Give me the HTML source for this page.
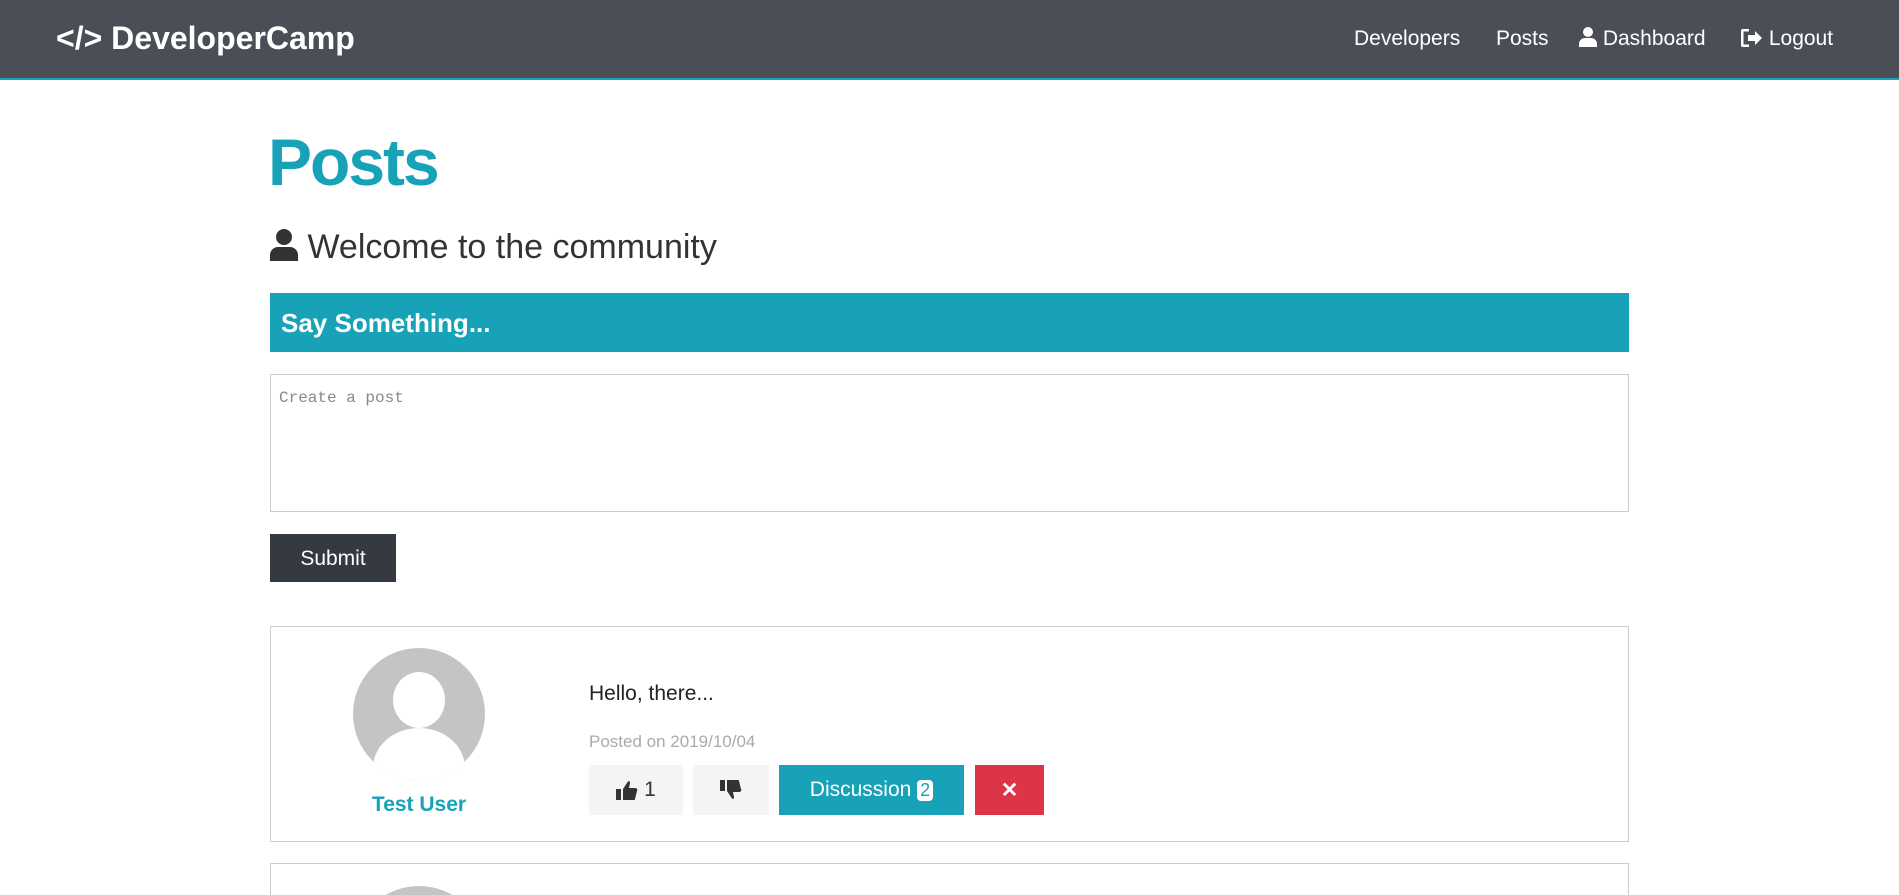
<!DOCTYPE html>
<html><head><meta charset="utf-8"><style>
*{box-sizing:border-box;margin:0;padding:0}
html,body{width:1899px;height:895px;overflow:hidden}
body{background:#fff;font-family:"Liberation Sans",sans-serif;color:#333}
#w{position:relative;width:1899px;height:895px;overflow:hidden}
.nav{position:absolute;left:0;top:0;width:1899px;height:80px;background:#4a4e56;border-bottom:2px solid #17a2b8}
.abs{position:absolute}
.logo{left:56px;top:20px;color:#fff;font-weight:bold;font-size:32px;white-space:nowrap}
.nl{top:27px;color:#fff;font-size:21px;white-space:nowrap}
.btn{position:absolute;display:flex;align-items:center;justify-content:center;font-size:21px}
</style></head><body><div id="w">
<div class="nav">
<div class="abs logo">&lt;/&gt; DeveloperCamp</div>
<div class="abs nl" style="left:1354px">Developers</div>
<div class="abs nl" style="left:1496px">Posts</div>
<div class="abs nl" style="left:1579px"><svg width="18" height="20" viewBox="0 0 18 20" style="vertical-align:-2px"><circle cx="9" cy="5" r="5" fill="#fff"/><path d="M0 20v-3a6 6 0 0 1 6-6h6a6 6 0 0 1 6 6v3z" fill="#fff"/></svg> Dashboard</div>
<div class="abs nl" style="left:1741px"><svg width="22" height="18" viewBox="0 0 22 18" style="vertical-align:-2px"><path d="M8 1H3a2 2 0 0 0-2 2v12a2 2 0 0 0 2 2h5" stroke="#fff" stroke-width="3" fill="none"/><path d="M7 6h7V2l7 7-7 7v-4H7z" fill="#fff"/></svg> Logout</div>
</div>
<div class="abs" style="left:268px;top:124px;font-size:66px;font-weight:bold;color:#17a2b8;letter-spacing:-2px">Posts</div>
<div class="abs" style="left:270px;top:228px;font-size:34px;color:#333;white-space:nowrap"><svg width="28" height="32" viewBox="0 0 28 32" style="vertical-align:-3px"><circle cx="14" cy="8" r="8" fill="#333"/><path d="M0 32v-6a8 8 0 0 1 8-8h12a8 8 0 0 1 8 8v6z" fill="#333"/></svg> Welcome to the community</div>
<div class="abs" style="left:270px;top:293px;width:1359px;height:59px;background:#17a2b8;color:#fff;font-weight:bold;font-size:26px;padding:15px 11px">Say Something...</div>
<div class="abs" style="left:270px;top:374px;width:1359px;height:138px;border:1px solid #ccc;padding:14px 8px;font-family:'Liberation Mono',monospace;font-size:16px;color:#888">Create a post</div>
<div class="btn" style="left:270px;top:534px;width:126px;height:48px;background:#343a40;color:#fff;padding-top:2px">Submit</div>
<div class="abs" style="left:270px;top:626px;width:1359px;height:216px;border:1px solid #ccc"></div>
<div class="abs" style="left:353px;top:648px;width:132px;height:132px;border-radius:50%;background:#c4c4c4;overflow:hidden"><div class="abs" style="left:40px;top:24px;width:52px;height:56px;border-radius:50%;background:#fff"></div><div class="abs" style="left:20px;top:80px;width:92px;height:80px;border-radius:50%;background:#fff"></div></div>
<div class="abs" style="left:340px;top:793px;width:158px;text-align:center;font-weight:bold;color:#17a2b8;font-size:21px">Test User</div>
<div class="abs" style="left:589px;top:682px;font-size:21px;color:#222">Hello, there...</div>
<div class="abs" style="left:589px;top:732px;font-size:17px;color:#aaa">Posted on 2019/10/04</div>
<div class="btn" style="left:589px;top:765px;width:94px;height:50px;background:#f4f4f4;color:#333"><svg width="22" height="20" viewBox="0 0 22 20"><rect x="0" y="9" width="5" height="11" fill="#333"/><path d="M7 9l4-6c1-2 3-3 3 0l-1 5h6c2 0 3 2 2 3l-2 8c0 1-1 1-2 1H7z" fill="#333"/></svg>&nbsp;1</div>
<div class="btn" style="left:693px;top:765px;width:76px;height:50px;background:#f4f4f4;color:#333"><svg width="22" height="20" viewBox="0 0 22 20"><rect x="0" y="0" width="5" height="11" fill="#333"/><path d="M7 11l4 6c1 2 3 3 3 0l-1-5h6c2 0 3-2 2-3l-2-8c0-1-1-1-2-1H7z" fill="#333"/></svg></div>
<div class="btn" style="left:779px;top:765px;width:185px;height:50px;background:#17a2b8;color:#fff">Discussion&nbsp;<span style="background:#fff;color:#17a2b8;border-radius:4px;padding:0 3px;font-size:18px">2</span></div>
<div class="btn" style="left:975px;top:765px;width:69px;height:50px;background:#dc3545;color:#fff;font-weight:bold">✕</div>
<div class="abs" style="left:270px;top:863px;width:1359px;height:200px;border:1px solid #ccc"></div>
<div class="abs" style="left:353px;top:886px;width:132px;height:132px;border-radius:50%;background:#c4c4c4"></div>
</div></body></html>
